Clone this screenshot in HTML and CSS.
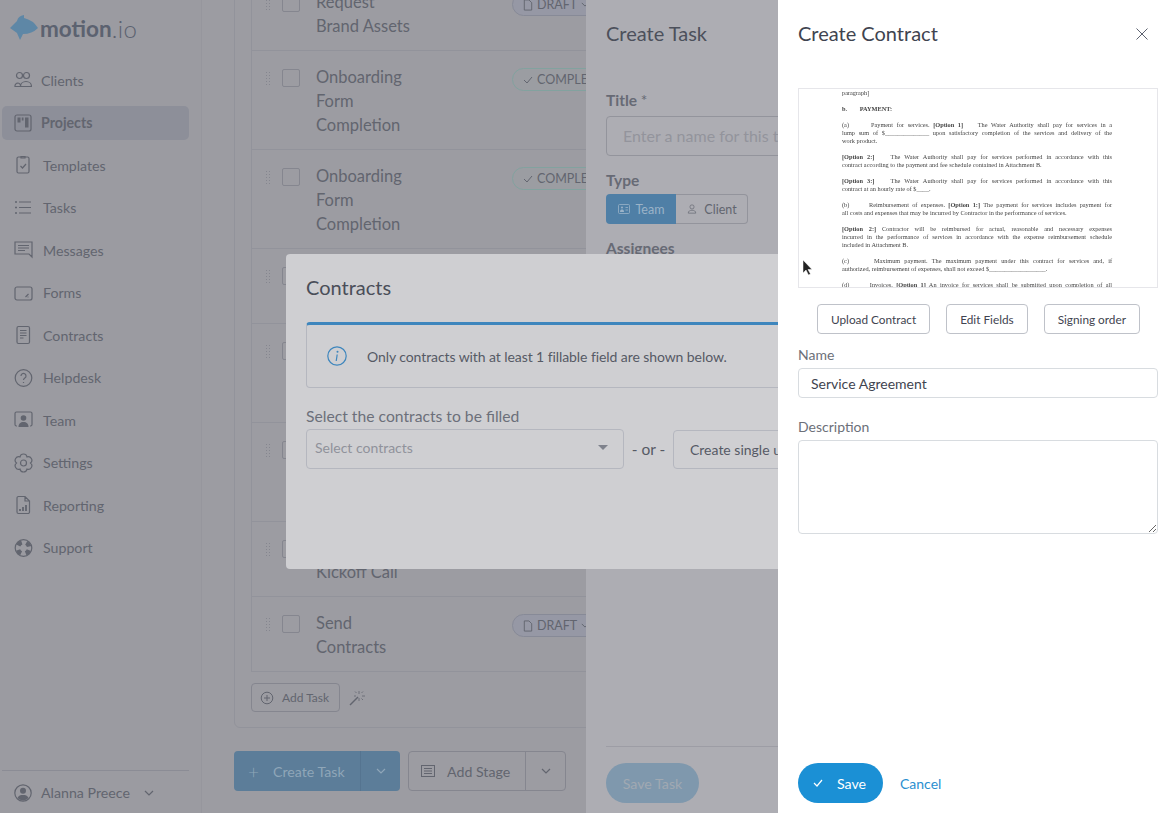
FILE: index.html
```html
<!DOCTYPE html>
<html lang="en">
<head>
    <meta charset="UTF-8">
    <meta name="viewport" content="width=device-width, initial-scale=1.0">
    <title>Create Contract</title>
    <link rel="stylesheet" href="styles.css">
</head>
<body>
    <div class="app">
        <aside class="sidebar">
            <div class="logo">
                <svg class="logo-fish" viewBox="0 0 28 26"><path d="M0 13 L7 6 Q8 1 14 0 L14 3 Q23 5 28 13 Q22 19 13 19 L10 25 L7 18 Z"/></svg>
                <span class="logo-name">motion</span><span class="logo-io">.io</span>
            </div>
            <nav class="nav">
                <a class="nav-item nav-item-tight">
                    <svg class="icon" viewBox="0 0 18 18"><circle cx="5.5" cy="4.5" r="3"/><circle cx="12.5" cy="4.5" r="3"/><path d="M1 15.5a3 3 0 0 1 3-3.500 3 3 0 0 1 2.500 3.500zM6.500 15.500c0-3 2.500-5 5.500-5s5.500 2 5.500 5z"/></svg>
                    Clients
                </a>
                <a class="nav-item nav-item-tight nav-item-active">
                    <svg class="icon" viewBox="0 0 18 18"><rect x="1" y="1" width="16" height="16" rx="2"/><path class="solid" d="M3.500 3.500h3v5h-3zM7.800 3.500h1.700v3h-1.700zM11 3.500h3.500v10H11z"/></svg>
                    Projects
                </a>
                <a class="nav-item">
                    <svg class="icon" viewBox="0 0 20 20"><rect x="3" y="2" width="12" height="16" rx="1.500"/><path d="M7 1.500h4v1.500H7zM6.500 11l2 2 3.500-4"/></svg>
                    Templates
                </a>
                <a class="nav-item">
                    <svg class="icon" viewBox="0 0 20 20"><path d="M5 4h12M5 9.500h12M5 15h12"/><path class="dots" d="M1 4h2M1 9.500h2M1 15h2"/></svg>
                    Tasks
                </a>
                <a class="nav-item">
                    <svg class="icon" viewBox="0 0 20 20"><path d="M1 2h17v15l-3-3H1zM4 5.500h11M4 8h11M4 10.500h7"/></svg>
                    Messages
                </a>
                <a class="nav-item">
                    <svg class="icon" viewBox="0 0 20 20"><rect x="1" y="4" width="17" height="13" rx="2"/><path d="M11.500 14l3-3M13.500 14h1"/></svg>
                    Forms
                </a>
                <a class="nav-item">
                    <svg class="icon" viewBox="0 0 20 20"><rect x="3" y="1.500" width="12.500" height="17" rx="1.500"/><path d="M6 5.500h6.500M6 8h6.500M6 10.500h6.500M6 13h3.500"/></svg>
                    Contracts
                </a>
                <a class="nav-item">
                    <svg class="icon" viewBox="0 0 20 20"><circle cx="9.500" cy="10" r="8.300"/><path d="M7 8a2.500 2.500 0 1 1 3.800 2.100c-.9.600-1.300 1-1.300 2M9.500 14v1"/></svg>
                    Helpdesk
                </a>
                <a class="nav-item">
                    <svg class="icon" viewBox="0 0 20 20"><path d="M3 16H2.500A1.500 1.500 0 0 1 1 14.500V3.500A1.500 1.500 0 0 1 2.500 2h14A1.500 1.500 0 0 1 18 3.500v11a1.500 1.500 0 0 1-1.500 1.500H16"/><circle class="solid" cx="9.500" cy="8" r="2.800"/><path class="solid" d="M4.500 17c0-3.500 2-5 5-5s5 1.500 5 5z"/></svg>
                    Team
                </a>
                <a class="nav-item">
                    <svg class="icon" viewBox="0 0 20 20"><g transform="translate(-.500 0)"><path d="M6.500 3.900A3.560 3.560 0 0 1 13.500 3.900A3.560 3.560 0 0 1 17 10A3.560 3.560 0 0 1 13.500 16.100A3.560 3.560 0 0 1 6.500 16.100A3.560 3.560 0 0 1 3 10A3.560 3.560 0 0 1 6.500 3.900Z"/><circle cx="10" cy="10" r="3"/></g></svg>
                    Settings
                </a>
                <a class="nav-item">
                    <svg class="icon" viewBox="0 0 20 20"><path d="M3 3a1.500 1.500 0 0 1 1.500-1.500H11L15.500 6v11a1.500 1.500 0 0 1-1.500 1.500H4.500A1.500 1.500 0 0 1 3 17zM11 1.500V6h4.500"/><path class="bars" d="M6 16v-2M9 16v-4M12 16v-6"/></svg>
                    Reporting
                </a>
                <a class="nav-item">
                    <svg class="icon" viewBox="0 0 20 20"><circle cx="9.500" cy="10" r="8.300"/><circle class="buoy" cx="9.500" cy="10" r="5.800" transform="rotate(22 9.500 10)"/></svg>
                    Support
                </a>
            </nav>
            <div class="user">
                <svg class="user-avatar" viewBox="0 0 18 18"><circle class="ring" cx="9" cy="9" r="8.200"/><circle cx="9" cy="6.800" r="3"/><path d="M3.500 14c1-2.500 3-3 5.500-3s4.500.5 5.500 3a7.500 7.500 0 0 1-11 0z"/></svg>
                <span>Alanna Preece</span>
                <svg class="chevron" viewBox="0 0 10 6"><path d="M1 1l4 4 4-4"/></svg>
            </div>
        </aside>

        <main class="main">
            <section class="stage-card">
                <div class="task-list">
                    <div class="task-row">
                        <span class="drag"></span><span class="check"></span>
                        <span class="task-title">Request<br>Brand Assets</span>
                        <span class="badge badge-draft"><svg class="badge-icon" viewBox="0 0 10 13"><path d="M1 1h5l3 3v8H1z"/></svg>DRAFT<svg class="badge-caret" viewBox="0 0 10 6"><path d="M1 1l4 4 4-4"/></svg></span>
                    </div>
                    <div class="task-row">
                        <span class="drag"></span><span class="check"></span>
                        <span class="task-title">Onboarding<br>Form<br>Completion</span>
                        <span class="badge badge-done"><svg class="badge-icon" viewBox="0 0 10 8"><path d="M1 4l3 3 5-6"/></svg>COMPLETED</span>
                    </div>
                    <div class="task-row">
                        <span class="drag"></span><span class="check"></span>
                        <span class="task-title">Onboarding<br>Form<br>Completion</span>
                        <span class="badge badge-done"><svg class="badge-icon" viewBox="0 0 10 8"><path d="M1 4l3 3 5-6"/></svg>COMPLETED</span>
                    </div>
                    <div class="task-row">
                        <span class="drag"></span><span class="check"></span>
                        <span class="task-title"><br><br></span>
                    </div>
                    <div class="task-row">
                        <span class="drag"></span><span class="check"></span>
                        <span class="task-title"><br><br><br></span>
                    </div>
                    <div class="task-row">
                        <span class="drag"></span><span class="check"></span>
                        <span class="task-title"><br><br><br></span>
                    </div>
                    <div class="task-row">
                        <span class="drag"></span><span class="check"></span>
                        <span class="task-title"><br>Kickoff Call</span>
                    </div>
                    <div class="task-row">
                        <span class="drag"></span><span class="check"></span>
                        <span class="task-title">Send<br>Contracts</span>
                        <span class="badge badge-draft"><svg class="badge-icon" viewBox="0 0 10 13"><path d="M1 1h5l3 3v8H1z"/></svg>DRAFT<svg class="badge-caret" viewBox="0 0 10 6"><path d="M1 1l4 4 4-4"/></svg></span>
                    </div>
                </div>
                <div class="add-task-row">
                    <button class="add-task">
                        <svg class="add-icon" viewBox="0 0 14 14"><circle cx="7" cy="7" r="5.800"/><path d="M7 4v6M4 7h6"/></svg>
                        Add Task
                    </button>
                    <svg class="wand" viewBox="0 0 16 16"><path d="M1 15l8-8"/><path class="wand-spark" d="M10 1v3M10 8v3M13 6h3M5 6h2M12.500 3l1.500-1.500M12.500 8.500l1.500 1.500M7.500 3L6 1.500"/></svg>
                </div>
            </section>
            <div class="toolbar">
                <div class="btn-create">
                    <span class="btn-create-label"><span class="plus">+</span>Create Task</span>
                    <span class="btn-create-caret"><svg class="chevron" viewBox="0 0 10 6"><path d="M1 1l4 4 4-4"/></svg></span>
                </div>
                <div class="btn-stage">
                    <span class="btn-stage-label">
                        <svg class="stage-icon" viewBox="0 0 14 12"><rect x=".5" y=".5" width="13" height="11"/><path d="M3 3.500h8M3 6h8M3 8.500h8"/></svg>
                        Add Stage
                    </span>
                    <span class="btn-stage-caret"><svg class="chevron" viewBox="0 0 10 6"><path d="M1 1l4 4 4-4"/></svg></span>
                </div>
            </div>
        </main>
    </div>

    <!-- panels stacked over the page -->
    <section class="task-panel">
        <h2 class="panel-title">Create Task</h2>
        <label class="task-label task-label-title">Title <span class="star">*</span></label>
        <input class="task-input" type="text" placeholder="Enter a name for this task" disabled>
        <label class="task-label task-label-type">Type</label>
        <div class="segment">
            <span class="segment-on">
                <svg class="segment-icon" viewBox="0 0 12 10"><rect x=".5" y=".5" width="11" height="9" rx="1"/><path class="solid" d="M2 8c0-2 1-2.500 2-2.500S6 6 6 8zM3 3.500a1 1 0 1 0 2 0 1 1 0 1 0-2 0z"/><path d="M7.500 3.500H10M7.500 6H10"/></svg>
                Team
            </span>
            <span class="segment-off">
                <svg class="segment-icon" viewBox="0 0 12 12"><circle cx="6" cy="3.500" r="2.500"/><path d="M1.500 11c0-2.500 2-3.500 4.500-3.500s4.500 1 4.500 3.500z"/></svg>
                Client
            </span>
        </div>
        <label class="task-label task-label-assign">Assignees</label>
        <div class="task-footer">
            <button class="save-task">Save Task</button>
        </div>
    </section>

    <section class="contracts-modal">
        <h2 class="modal-title">Contracts</h2>
        <div class="alert">
            <svg class="alert-icon" viewBox="0 0 20 20"><circle cx="10" cy="10" r="9.200"/><circle class="alert-dot" cx="10.500" cy="5.800" r="1"/><path d="M10.200 8.500l-1 6.500"/></svg>
            <span>Only contracts with at least 1 fillable field are shown below.</span>
        </div>
        <div class="select-label">Select the contracts to be filled</div>
        <div class="select-row">
            <div class="select">
                <span>Select contracts</span>
                <span class="select-arrow"></span>
            </div>
            <span class="or">- or -</span>
            <button class="single-btn">Create single use contract</button>
        </div>
    </section>

    <section class="contract-panel">
        <div class="contract-head">
            <h2 class="panel-title">Create Contract</h2>
            <svg class="close" viewBox="0 0 12 12"><path d="M.5.5l11 11M11.500.5l-11 11"/></svg>
        </div>
        <div class="doc-preview">
            <div class="doc-page">
                <p>paragraph]</p>
                <p><b>b.&nbsp;&nbsp;&nbsp;&nbsp;&nbsp;&nbsp;&nbsp;&nbsp;PAYMENT:</b></p>
                <p><span class="fill">(a)&nbsp;&nbsp;&nbsp;&nbsp;&nbsp;&nbsp;Payment for services. <b>[Option 1]</b>&nbsp;&nbsp;&nbsp;&nbsp;The Water Authority shall pay for services in a</span>
                   <span class="fill">lump sum of $______________ upon satisfactory completion of the services and delivery of the</span>
                   work product.</p>
                <p><span class="fill"><b>[Option 2:]</b>&nbsp;&nbsp;&nbsp;&nbsp;The Water Authority shall pay for services performed in accordance with this</span>
                   contract according to the payment and fee schedule contained in Attachment B.</p>
                <p><span class="fill"><b>[Option 3:]</b>&nbsp;&nbsp;&nbsp;&nbsp;The Water Authority shall pay for services performed in accordance with this</span>
                   contract at an hourly rate of $____.</p>
                <p><span class="fill">(b)&nbsp;&nbsp;&nbsp;&nbsp;&nbsp;&nbsp;Reimbursement of expenses. <b>[Option 1:]</b> The payment for services includes payment for</span>
                   all costs and expenses that may be incurred by Contractor in the performance of services.</p>
                <p><span class="fill"><b>[Option 2:]</b> Contractor will be reimbursed for actual, reasonable and necessary expenses</span>
                   <span class="fill">incurred in the performance of services in accordance with the expense reimbursement schedule</span>
                   included in Attachment B.</p>
                <p><span class="fill">(c)&nbsp;&nbsp;&nbsp;&nbsp;&nbsp;&nbsp;Maximum payment. The maximum payment under this contract for services and, if</span>
                   authorized, reimbursement of expenses, shall not exceed $__________________.</p>
                <p><span class="fill">(d)&nbsp;&nbsp;&nbsp;&nbsp;&nbsp;&nbsp;Invoices. <b>[Option 1]</b> An invoice for services shall be submitted upon completion of all</span></p>
            </div>
            <svg class="cursor" viewBox="0 0 11 16"><path d="M1 0v13l3-3 2.500 5 2-1-2.500-4.500h4z"/></svg>
        </div>
        <div class="doc-actions">
            <button class="doc-btn">Upload Contract</button>
            <button class="doc-btn">Edit Fields</button>
            <button class="doc-btn">Signing order</button>
        </div>
        <label class="field-label field-label-name">Name</label>
        <input class="field-input" type="text" value="Service Agreement">
        <label class="field-label field-label-desc">Description</label>
        <textarea class="field-area"></textarea>
        <div class="contract-footer">
            <button class="save-btn">
                <svg class="save-check" viewBox="0 0 10 8"><path d="M1 4l3 3 5-6"/></svg>
                Save
            </button>
            <a class="cancel">Cancel</a>
        </div>
    </section>
</body>
</html>
```

FILE: styles.css
```css
* {
    box-sizing: border-box;
}

body {
    margin: 0;
    height: 100vh;
    overflow: hidden;
    font-family: "Lato", "Liberation Sans", sans-serif;
    text-rendering: optimizeLegibility;
    background-color: #9c9ca2;
    color: #62656f;
}

h2 {
    margin: 0;
    font-weight: 400;
}

button {
    font-family: inherit;
}

.app {
    display: flex;
    height: 100vh;
}

/* sidebar */
.sidebar {
    width: 202px;
    flex-shrink: 0;
    height: 100vh;
    padding: 0 12px 0 2px;
    display: flex;
    flex-direction: column;
    border-right: 1px solid #96969d;
    background-color: #9b9ba1;
}

.logo {
    height: 63px;
    display: flex;
    align-items: center;
    padding: 0 0 7px 8px;
    color: #5c6270;
}

.logo-fish {
    width: 28px;
    height: 26px;
    margin-right: 2px;
    fill: #5e87a6;
}

.logo-name {
    font-size: 22.500px;
    font-weight: 700;
}

.logo-io {
    font-size: 24px;
    font-weight: 300;
    letter-spacing: .5px;
}

.nav-item {
    height: 34px;
    margin-bottom: 8.500px;
    padding-left: 12px;
    display: flex;
    align-items: center;
    gap: 9px;
    font-size: 14.200px;
    border-radius: 5px;
}

.nav-item-active {
    background-color: #8d8f99;
    font-weight: 700;
}

.icon {
    width: 20px;
    height: 20px;
    flex-shrink: 0;
    fill: none;
    stroke: #62656f;
    stroke-width: 1.200;
}

.nav-item-tight .icon {
    width: 18px;
    height: 18px;
}

.icon .solid {
    fill: #62656f;
    stroke: none;
}

.icon .dots {
    stroke-dasharray: 2;
    stroke-width: 1.600;
}

.icon .bars {
    stroke-width: 1.800;
}

.icon .buoy {
    stroke-width: 4.500;
    stroke-dasharray: 4.500 4.600;
}

.user {
    margin-top: auto;
    height: 43px;
    padding: 1px 0 0 12px;
    display: flex;
    align-items: center;
    gap: 9px;
    font-size: 14.200px;
    border-top: 1px solid #8b8c95;
}

.user-avatar {
    width: 18px;
    height: 18px;
    fill: #62656f;
}

.user-avatar .ring {
    fill: none;
    stroke: #62656f;
    stroke-width: 1.200;
}

.chevron {
    width: 10px;
    height: 6px;
    fill: none;
    stroke: currentColor;
    stroke-width: 1.200;
}

.user .chevron {
    margin-left: 5px;
}

/* main column, ends where the task panel starts */
.main {
    width: 384px;
    flex-shrink: 0;
    height: 100vh;
    overflow: hidden;
    padding-left: 32px;
}

.stage-card {
    margin-top: -42px;
    padding: 16px 0 15px 16px;
    width: 1000px;
    border: 1px solid #92939b;
    border-radius: 6px;
}

.task-list {
    border: 1px solid #92939b;
}

.task-row {
    padding: 14px 0 12px 13px;
    display: flex;
    align-items: flex-start;
    border-bottom: 1px solid #92939b;
}

.task-row:last-child {
    border-bottom: none;
}

.drag {
    width: 6px;
    height: 15px;
    margin-top: 6px;
    background-image: radial-gradient(circle, #85868f 1px, transparent 1px);
    background-size: 3px 3px;
}

.check {
    width: 18px;
    height: 18px;
    margin: 4px 16px 0 11px;
    border: 1px solid #85868f;
    border-radius: 2px;
}

.task-title {
    width: 196px;
    font-size: 16.500px;
    line-height: 24px;
}

.badge {
    height: 23px;
    margin-top: 3px;
    padding: 0 10px;
    display: inline-flex;
    align-items: center;
    gap: 4px;
    font-size: 12.500px;
    border: 1px solid;
    border-radius: 12px;
    white-space: nowrap;
}

.badge-draft {
    border-color: #878a97;
    background-color: #9698a5;
}

.badge-done {
    border-color: #82a29f;
    background-color: #9b9da2;
}

.badge-icon {
    width: 10px;
    height: 12px;
    fill: none;
    stroke: #62656f;
    stroke-width: 1;
}

.badge-caret {
    width: 8px;
    height: 5px;
    fill: none;
    stroke: #62656f;
    stroke-width: 1.200;
}

.add-task-row {
    margin-top: 11px;
    display: flex;
    align-items: center;
    gap: 9px;
}

.add-task {
    width: 89px;
    height: 29px;
    padding: 0 0 0 8px;
    display: flex;
    align-items: center;
    gap: 8px;
    font-size: 12px;
    color: #62656f;
    background: none;
    border: 1px solid #85868f;
    border-radius: 4px;
}

.add-icon {
    width: 14px;
    height: 14px;
    fill: none;
    stroke: #62656f;
}

.wand {
    width: 16px;
    height: 16px;
    fill: none;
    stroke: #62656f;
    stroke-width: 1.500;
}

.wand .wand-spark {
    stroke-width: .8;
}

.toolbar {
    margin-top: 23px;
    display: flex;
    gap: 8px;
}

.btn-create {
    width: 166px;
    height: 40px;
    display: flex;
    align-items: center;
    font-size: 14.200px;
    color: #8fa6b8;
    background-color: #5c7d99;
    border-radius: 4px;
}

.btn-create-label {
    width: 127px;
    height: 100%;
    padding-left: 14px;
    display: flex;
    align-items: center;
    border-right: 1px solid #557490;
}

.plus {
    width: 25px;
    font-size: 19px;
    font-weight: 300;
}

.btn-create-caret,
.btn-stage-caret {
    flex: 1;
    height: 100%;
    display: flex;
    align-items: center;
    justify-content: center;
}

.btn-stage {
    width: 158px;
    height: 40px;
    display: flex;
    align-items: center;
    font-size: 14.200px;
    border: 1px solid #85868f;
    border-radius: 4px;
}

.btn-stage-label {
    width: 117px;
    height: 100%;
    padding-left: 12px;
    display: flex;
    align-items: center;
    gap: 12px;
    border-right: 1px solid #85868f;
}

.stage-icon {
    width: 14px;
    height: 12px;
    fill: none;
    stroke: #62656f;
}

/* create task panel, behind the modal */
.task-panel {
    position: absolute;
    top: 0;
    right: 0;
    bottom: 0;
    left: 586px;
    padding: 0 0 10px 20px;
    display: flex;
    flex-direction: column;
    background-color: #adadb3;
}

.panel-title {
    font-size: 20px;
    line-height: 24px;
    margin-top: 21px;
    color: #4c505b;
}

.task-label {
    font-size: 15.500px;
    font-weight: 700;
    line-height: 20px;
    color: #676a75;
}

.task-label-title {
    margin-top: 45px;
}

.star {
    font-weight: 400;
}

.task-input {
    width: 400px;
    height: 40px;
    margin-top: 6px;
    padding: 0 16px 2px;
    font-family: inherit;
    font-size: 16px;
    background: none;
    border: 1px solid #93949c;
    border-radius: 4px;
}

.task-input::placeholder {
    color: #93949c;
}

.task-label-type {
    margin-top: 14px;
}

.segment {
    width: 142px;
    height: 30px;
    margin-top: 4px;
    display: flex;
    font-size: 12.500px;
}

.segment-on,
.segment-off {
    display: flex;
    align-items: center;
    justify-content: center;
    gap: 6px;
}

.segment-on {
    width: 70px;
    color: #9bb3c8;
    background-color: #4f7fa6;
    border-radius: 4px 0 0 4px;
}

.segment-off {
    flex: 1;
    border: 1px solid #93949c;
    border-left: none;
    border-radius: 0 4px 4px 0;
}

.segment-icon {
    width: 12px;
    height: 10px;
    fill: none;
    stroke: currentColor;
    stroke-width: .8;
}

.segment-icon .solid {
    fill: currentColor;
    stroke: none;
}

.task-label-assign {
    margin-top: 14px;
}

.task-footer {
    margin-top: auto;
    padding-top: 16px;
    border-top: 1px solid #9d9da5;
}

.save-task {
    width: 93px;
    height: 40px;
    padding: 0;
    font-size: 14.200px;
    color: #a1a9b2;
    background-color: #7f98ad;
    border: none;
    border-radius: 20px;
}

/* contracts modal */
.contracts-modal {
    position: absolute;
    top: 254px;
    left: 286px;
    width: 598px;
    height: 315px;
    padding: 21px 20px 0;
    background-color: #cfcfd2;
    border-radius: 4px;
}

.modal-title {
    font-size: 20px;
    line-height: 24px;
    color: #4a4e59;
}

.alert {
    height: 66px;
    margin-top: 23px;
    padding-left: 20px;
    display: flex;
    align-items: center;
    gap: 20px;
    font-size: 14px;
    letter-spacing: -.08px;
    color: #565a65;
    border: 1px solid #b5b7bf;
    border-top: 3px solid #3e86bd;
    border-radius: 4px;
}

.alert-icon {
    width: 20px;
    height: 20px;
    fill: none;
    stroke: #3e86bd;
    stroke-width: 1.200;
}

.alert .alert-dot {
    fill: #3e86bd;
    stroke: none;
}

.select-label {
    margin-top: 18px;
    font-size: 15.700px;
    line-height: 20px;
    color: #6c6f7a;
}

.select-row {
    margin-top: 3px;
    display: flex;
    align-items: flex-end;
}

.select {
    width: 318px;
    height: 40px;
    flex-shrink: 0;
    padding: 0 15px 3px 8px;
    display: flex;
    align-items: center;
    justify-content: space-between;
    font-size: 14px;
    color: #90929b;
    border: 1px solid #b5b7bf;
    border-radius: 4px;
}

.select-arrow {
    width: 0;
    height: 0;
    border-left: 5px solid transparent;
    border-right: 5px solid transparent;
    border-top: 5px solid #7f828c;
}

.or {
    width: 49px;
    flex-shrink: 0;
    height: 39px;
    line-height: 39px;
    text-align: center;
    font-size: 15.500px;
    color: #565a65;
}

.single-btn {
    height: 39px;
    padding: 0 16px;
    font-size: 14px;
    color: #565a65;
    white-space: nowrap;
    background: none;
    border: 1px solid #b5b7bf;
    border-radius: 4px;
}

/* create contract panel */
.contract-panel {
    position: absolute;
    top: 0;
    right: 0;
    bottom: 0;
    left: 778px;
    padding: 0 12px 10px 20px;
    display: flex;
    flex-direction: column;
    background-color: #fff;
}

.contract-head {
    display: flex;
    justify-content: space-between;
    align-items: center;
}

.contract-head .panel-title {
    color: #3f4450;
}

.close {
    width: 12px;
    height: 12px;
    margin: 22px 10px 0 0;
    stroke: #5d6270;
    stroke-width: 1;
}

.doc-preview {
    position: relative;
    height: 200px;
    margin-top: 43px;
    overflow: hidden;
    border: 1px solid #e6e6ea;
}

.doc-page {
    width: 270px;
    margin-left: 43px;
    font-family: "Liberation Serif", serif;
    font-size: 6.300px;
    line-height: 8px;
    color: #444;
    filter: blur(.6px);
}

.doc-page p {
    margin: 0 0 8px;
    white-space: nowrap;
}

.doc-page b {
    font-weight: 700;
}

.fill {
    display: block;
    text-align: justify;
    text-align-last: justify;
    white-space: normal;
}

.cursor {
    position: absolute;
    top: 171px;
    left: 3px;
    width: 11px;
    height: 16px;
    fill: #222;
    stroke: #fff;
    stroke-width: .5;
}

.doc-actions {
    margin-top: 16px;
    padding-left: 19px;
    display: flex;
    gap: 16px;
}

.doc-btn {
    height: 30px;
    padding: 0 13px;
    font-size: 11.800px;
    color: #3f4450;
    background-color: #fff;
    border: 1px solid #bfc2c9;
    border-radius: 4px;
}

.field-label {
    font-size: 14px;
    line-height: 18px;
    color: #6c7079;
}

.field-label-name {
    margin-top: 12px;
}

.field-input {
    height: 30px;
    margin-top: 4px;
    padding: 0 12px;
    font-family: inherit;
    font-size: 14px;
    color: #3f4450;
    border: 1px solid #d8dce0;
    border-radius: 4px;
}

.field-label-desc {
    margin-top: 20px;
}

.field-area {
    height: 94px;
    margin-top: 4px;
    border: 1px solid #d8dce0;
    border-radius: 4px;
}

.contract-footer {
    margin-top: auto;
    display: flex;
    align-items: center;
    gap: 17px;
}

.save-btn {
    width: 85px;
    height: 40px;
    padding: 0 0 0 15px;
    display: flex;
    align-items: center;
    gap: 14px;
    font-size: 14.200px;
    color: #fff;
    background-color: #1b90d5;
    border: none;
    border-radius: 20px;
}

.save-check {
    width: 10px;
    height: 8px;
    fill: none;
    stroke: #fff;
    stroke-width: 1.200;
}

.cancel {
    font-size: 14px;
    color: #2a8fd0;
}
```
